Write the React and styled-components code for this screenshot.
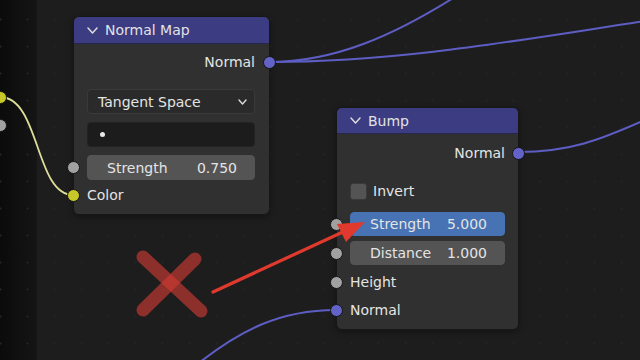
import React from "react";
import styled, { createGlobalStyle } from "styled-components";

const Global = createGlobalStyle`
  html, body { margin: 0; padding: 0; background: #1d1d1d; }
  body { font-family: "DejaVu Sans", "Liberation Sans", sans-serif; }
`;

const Canvas = styled.div`
  position: relative;
  width: 640px;
  height: 360px;
  overflow: hidden;
  background:
    radial-gradient(circle, #232323 0.8px, transparent 1.4px) 14px 6px / 27px 27px,
    linear-gradient(to right, #0b0b0b 0px, #151515 37px, #1d1d1d 37px);
  font-family: "DejaVu Sans", "Liberation Sans", sans-serif;
  font-size: 14px;
  color: #e4e4e4;
`;

const Layer = styled.svg`
  position: absolute;
  left: 0;
  top: 0;
  width: 640px;
  height: 360px;
  pointer-events: none;
  z-index: ${(p) => p.$z};
`;

const Node = styled.div`
  position: absolute;
  left: ${(p) => p.$x}px;
  top: ${(p) => p.$y}px;
  width: ${(p) => p.$w}px;
  height: ${(p) => p.$h}px;
  box-sizing: border-box;
  background: #303030;
  border: 1px solid #171717;
  border-radius: 6px;
  box-shadow: 0 2px 6px rgba(0, 0, 0, 0.35);
  display: flex;
  flex-direction: column;
  z-index: 2;
`;

const Header = styled.div`
  height: ${(p) => p.$h}px;
  flex: none;
  display: flex;
  align-items: center;
  gap: 7px;
  padding-left: 13px;
  background: #3c3c82;
  border-bottom: 1px solid #26264e;
  border-radius: 5px 5px 0 0;
  color: #e2e2e2;
`;

const Body = styled.div`
  display: flex;
  flex-direction: column;
  padding: ${(p) => p.$pt}px ${(p) => p.$pr}px 0 13px;
`;

const Row = styled.div`
  position: relative;
  height: 22px;
  flex: none;
  display: flex;
  align-items: center;
  justify-content: ${(p) => (p.$out ? "flex-end" : "flex-start")};
  margin-top: ${(p) => p.$mt || 0}px;
  gap: 6px;
`;

const Socket = styled.span`
  position: absolute;
  top: 50%;
  ${(p) =>
    p.$out
      ? `right: -${p.$edge + 6.5}px;`
      : `left: -${13 + 7.5 + (p.$inset || 0)}px;`}
  width: 11px;
  height: 11px;
  margin-top: -6.5px;
  border-radius: 50%;
  background: ${(p) => p.$color};
  border: 1px solid #141414;
  z-index: 3;
`;

const EdgeSocket = styled.span`
  position: absolute;
  left: ${(p) => p.$x - 6.5}px;
  top: ${(p) => p.$y - 6.5}px;
  width: 11px;
  height: 11px;
  border-radius: 50%;
  background: ${(p) => p.$color};
  border: 1px solid #141414;
  z-index: 3;
`;

const Field = styled.div`
  position: relative;
  height: ${(p) => p.$h}px;
  flex: none;
  box-sizing: border-box;
  margin-top: ${(p) => p.$mt || 0}px;
  border-radius: 4px;
  display: flex;
  align-items: center;
  justify-content: space-between;
  background: ${(p) => p.$bg};
  border: 1px solid ${(p) => p.$border || p.$bg};
  padding: ${(p) => p.$pad};
  color: #e4e4e4;
`;

const Dot = styled.span`
  width: 5px;
  height: 5px;
  border-radius: 50%;
  background: #e8e8e8;
`;

const Check = styled.span`
  width: 17px;
  height: 17px;
  border-radius: 3px;
  background: #545454;
  border: 1px solid #3a3a3a;
  box-sizing: border-box;
`;

const Chevron = ({ w = 11, h = 7, color = "#dcdcdc", sw = 1.5 }) => (
  <svg width={w} height={h} viewBox={`0 0 ${w} ${h}`}>
    <polyline
      points={`1,1 ${w / 2},${h - 1} ${w - 1},1`}
      fill="none"
      stroke={color}
      strokeWidth={sw}
      strokeLinecap="round"
      strokeLinejoin="round"
    />
  </svg>
);

const Slider = ({ label, value, bg, mt, h }) => (
  <Field $h={h} $mt={mt} $bg={bg} $pad="0 17px 0 19px">
    <span>{label}</span>
    <span>{value}</span>
    <Socket $color={GREY} $inset={1} />
  </Field>
);

const PURPLE = "#6363c7";
const YELLOW = "#c7c729";
const GREY = "#a1a1a1";

export default function App() {
  return (
    <>
      <Global />
      <Canvas>
        <Layer $z={1} viewBox="0 0 640 360">
          <g fill="none" strokeWidth="2" strokeLinecap="round">
            <path d="M269 62 C 335 62, 395 35, 458 -5" stroke="#5d5dc4" />
            <path d="M269 62 C 400 62, 520 40, 645 21" stroke="#5d5dc4" />
            <path d="M518 152 C 570 152, 600 140, 645 120" stroke="#5d5dc4" />
            <path d="M336 310 C 280 310, 240 330, 195 366" stroke="#5d5dc4" />
            <path d="M0 97 C 40 97, 35 195, 73 195" stroke="#dede9a" strokeWidth="1.8" />
          </g>
        </Layer>

        <EdgeSocket $x={0} $y={97} $color={YELLOW} />
        <EdgeSocket $x={0} $y={125} $color={GREY} />

        <Node $x={73} $y={16} $w={197} $h={199}>
          <Header $h={26}>
            <Chevron />
            <span>Normal Map</span>
          </Header>
          <Body $pt={7} $pr={14}>
            <Row $out>
              <span>Normal</span>
              <Socket $out $edge={14} $color={PURPLE} />
            </Row>
            <Field $h={25} $mt={16} $bg="#2a2a2a" $border="#3a3a3a" $pad="0 7px 0 10px">
              <span>Tangent Space</span>
              <Chevron w={9} h={6} sw={1.4} />
            </Field>
            <Field $h={25} $mt={8} $bg="#1c1c1c" $border="#232323" $pad="0 0 0 12px">
              <Dot />
            </Field>
            <Slider label="Strength" value="0.750" bg="#545454" mt={8} h={25} />
            <Row $mt={4}>
              <span>Color</span>
              <Socket $color={YELLOW} />
            </Row>
          </Body>
        </Node>

        <Node $x={336} $y={107} $w={183} $h={223}>
          <Header $h={25}>
            <Chevron />
            <span>Bump</span>
          </Header>
          <Body $pt={8} $pr={13}>
            <Row $out>
              <span>Normal</span>
              <Socket $out $edge={13} $color={PURPLE} />
            </Row>
            <Row $mt={16}>
              <Check />
              <span>Invert</span>
            </Row>
            <Slider label="Strength" value="5.000" bg="#4772b3" mt={10} h={24} />
            <Slider label="Distance" value="1.000" bg="#545454" mt={5} h={24} />
            <Row $mt={6}>
              <span>Height</span>
              <Socket $color={GREY} />
            </Row>
            <Row $mt={6}>
              <span>Normal</span>
              <Socket $color={PURPLE} />
            </Row>
          </Body>
        </Node>

        <Layer $z={5} viewBox="0 0 640 360">
          <g stroke="rgba(208,59,51,0.63)" strokeWidth="13" strokeLinecap="round" fill="none">
            <line x1="143" y1="257" x2="201" y2="311" />
            <line x1="195" y1="259" x2="143" y2="310" />
          </g>
          <line x1="213" y1="292" x2="345" y2="231" stroke="#e0392d" strokeWidth="3.2" strokeLinecap="round" />
          <polygon points="365,222 337,224 346,242" fill="#e0392d" />
        </Layer>
      </Canvas>
    </>
  );
}
